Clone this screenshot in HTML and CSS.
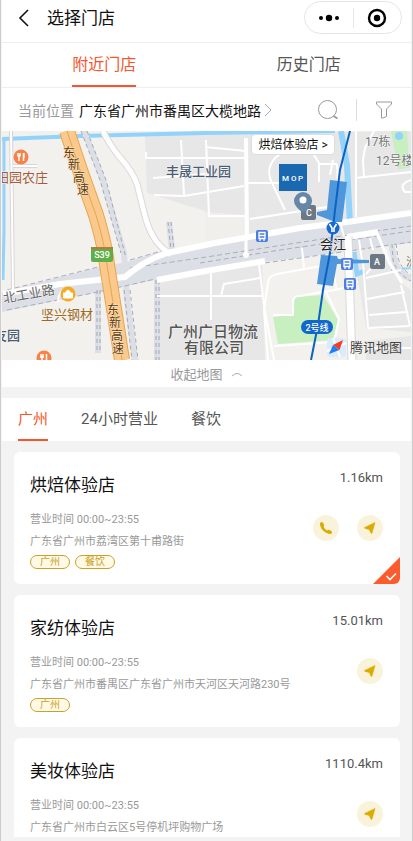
FILE: index.html
```html
<!DOCTYPE html>
<html lang="zh-CN">
<head>
    <meta charset="UTF-8">
    <meta name="viewport" content="width=device-width, initial-scale=1.0">
    <title>选择门店</title>
    <link rel="stylesheet" href="styles.css">
</head>
<body>
    <div class="screen">
        <header class="header">
            <button class="back" aria-label="返回">
                <svg width="12" height="18" viewBox="0 0 12 18"><path d="M10 1 2 9l8 8" fill="none" stroke="#111" stroke-width="1.6"/></svg>
            </button>
            <h1>选择门店</h1>
            <div class="capsule">
                <button aria-label="更多">
                    <svg width="22" height="8" viewBox="0 0 22 8"><circle cx="3" cy="4" r="2"/><circle cx="11" cy="4" r="3.2"/><circle cx="19" cy="4" r="2"/></svg>
                </button>
                <button aria-label="关闭">
                    <svg width="20" height="20" viewBox="0 0 20 20"><circle cx="10" cy="10" r="8" fill="none" stroke="#000" stroke-width="2.4"/><circle cx="10" cy="10" r="3.2"/></svg>
                </button>
            </div>
        </header>

        <nav class="tabs">
            <a href="#" class="active">附近门店</a>
            <a href="#">历史门店</a>
        </nav>

        <div class="location">
            <span class="location-label">当前位置</span>
            <a href="#">广东省广州市番禺区大榄地路<svg width="8" height="14" viewBox="0 0 8 14"><path d="M1 1l6 6-6 6" fill="none" stroke="#aaa"/></svg></a>
            <button class="search" aria-label="搜索">
                <svg width="20" height="20" viewBox="0 0 20 20"><circle cx="9.5" cy="9.5" r="9" fill="none" stroke="#999"/><path d="M15.500 16l4 2.500" stroke="#999" stroke-width="1.500"/></svg>
            </button>
            <button class="filter" aria-label="筛选">
                <svg width="16" height="18" viewBox="0 0 16 18"><path d="M.5 1h15v2L10.500 8v7.500L7 17H5.500V8L.5 3z" fill="none" stroke="#999" stroke-linejoin="round"/></svg>
            </button>
        </div>

        <div class="map">
            <svg viewBox="2 131 409 229" preserveAspectRatio="xMidYMid slice">
                <rect x="2" y="131" width="409" height="229" fill="#f2f1ed"/>

                <!-- zones -->
                <g fill="#e7e7e8">
                    <path d="M145 135 411 131V216L205 249V211L147 193z"/>
                    <path d="M157 283 262 260 265 360H157z"/>
                    <path d="M353 250 380 240 401 283 411 290V332L366 328z"/>
                    <path d="M366 341 411 336V360H366z"/>
                </g>
                <path d="M205 212 246 215V240L205 247z" fill="#f0efec"/>
                <path d="M295 297 323 295 338 320 333 340 278 344 273 317 293 315z" fill="#c7efc0"/>
                <path d="M391 131h16l2 37-11 1z" fill="#c7efc0"/>

                <!-- water -->
                <g fill="none" stroke="#93d3fb">
                    <path d="M2 139 80 136 205 133 335 131" stroke-width="4"/>
                    <path d="M4 141V230L3 280" stroke-width="3"/>
                    <path d="M341 131 347 165 350 224" stroke-width="6"/>
                    <path d="M354 252 357 274 365 271" stroke-width="5"/>
                    <path d="M391 270 411 268" stroke-width="2"/>
                </g>
                <circle cx="399" cy="136" r="4" fill="#93d3fb"/>

                <!-- railway -->
                <path d="M2 292 100 267 127 262 165 250 411 214V243L265 262 155 280 2 312z" fill="#dcdfe6"/>
                <g fill="none" stroke-linejoin="round">
                    <path d="M84 131 103 180 124 253 127 300 135 360M98 285V353M157 280V360M169 222 172 250" stroke="#dcdfe6" stroke-width="6"/>
                    <path d="M81 131 100 180 121 253M87 131 106 180 126 258M124 290 132 360M130 290 138 360M97 290V353M100 290V353M156 280V360M159 280V360M168 222 171 250M171 222 174 250" stroke="#a3a9b8" stroke-dasharray="4 3"/>
                    <path d="M7 290 102 266M7 310 103 291 155 279M130 260 165 250M130 268 200 258 335 237 411 226M200 263 280 250 411 231M265 263 335 253 411 242" stroke="#a9aebc" stroke-dasharray="5 3"/>
                    <path d="M391 244 395 262Q399 274 411 279" stroke="#dcdfe6" stroke-width="6"/>
                    <path d="M392 244 393 260Q397 274 411 281M396 244 398 258Q402 270 411 275" stroke="#a5abba" stroke-dasharray="4 3"/>
                </g>

                <!-- small streets -->
                <g fill="none" stroke="#d6d6d8" stroke-width="4">
                    <path d="M11 131 13 290M13 166H37"/>
                </g>
                <g fill="none" stroke="#fff" stroke-width="2" stroke-linejoin="round">
                    <path d="M11 131 13 290M13 166H37"/>
                    <path d="M146 152V158H244M153 178 205 174M154 195 184 196 244 186M181 140 184 195M206 140 209 216H246M205 147 246 151"/>
                    <path d="M246 138 247 240" stroke-width="4"/>
                    <path d="M248 183H292M250 219 327 207M285 210 272 183Q265 170 275 158L292 145M314 134V155L319 163V182M333 160 330 175M318 164H337"/>
                    <path d="M355 178 411 172M411 180Q398 184 405 192H411M374 131 365 148 363 160 364 177M356 131 356 217M337 164 340 222 345 240"/>
                    <path d="M302 248 304 269M259 264 264 306 274 360M268 360 264 310 268 283Q268 276 277 274L327 265Q333 264 334 273L336 289M273 315H293V300Q294 296 300 296L345 288M326 292 339 319 334 342 274 346"/>
                    <path d="M157 296H262M221 296 224 284 260 278M211 272V320"/>
                    <path d="M363 262 368 328 410 326M366 274 380 258M366 278 401 270M367 299 405 292M369 315 406 312M401 285 410 326M367 348H411M359 240 362 260M370 238 373 250"/>
                    <path d="M58 302Q58 292 66 288M158 245 170 256"/>
                </g>

                <!-- main roads -->
                <g fill="none" stroke-linejoin="round">
                    <path d="M103 131Q108 142 118 155 133 172 137 184L144 212Q151 242 168 252" stroke="#d9d9d9" stroke-width="7"/>
                    <path d="M103 131Q108 142 118 155 133 172 137 184L144 212Q151 242 168 252" stroke="#fff" stroke-width="5"/>
                    <path d="M3 294 60 284 125 277Q145 260 167 253L215 243 300 228 347 222 411 213" stroke="#fff" stroke-width="6"/>
                    <path d="M157 280 200 272 265 261M347 237 378 232" stroke="#fff" stroke-width="6"/>
                    <path d="M377 233 389 262 402 283" stroke="#fff" stroke-width="3"/>
                    <circle cx="246" cy="255" r="3" fill="#fff"/>
                    <path d="M246 240V255" stroke="#fff" stroke-width="3"/>
                    <path d="M348 236 349 270 352 360" stroke="#d9d9d9" stroke-width="9"/>
                    <path d="M348 236 349 270 352 360" stroke="#fff" stroke-width="7"/>
                </g>

                <!-- highway -->
                <g fill="none">
                    <path d="M67 131 80 170 96 215Q105 245 107 265L115 315 122 360" stroke="#e9a64d" stroke-width="16"/>
                    <path d="M67 131 80 170 96 215Q105 245 107 265L115 315 122 360" stroke="#fbc98c" stroke-width="14"/>
                    <path d="M67 131 80 170 96 215Q105 245 107 265L115 315 122 360" stroke="#e9a64d"/>
                </g>

                <!-- metro line -->
                <g fill="#4f96db">
                    <path d="M330 180 347 182 343 215 342 222 335 222 317 215 317 212 327 210z"/>
                    <path d="M321 255 337 256 338 259 369 260V263L337 264 333 286 317 284z"/>
                </g>
                <path d="M350 131 340 170 335 210 333 228 330 253 323 290 318 325 311 360" fill="none" stroke="#0c62c4" stroke-width="2"/>
                <circle cx="333" cy="228" r="6.500" fill="#1769cf"/>
                <path d="M329.500 224 332 228V232M336.500 224 334 228V232" fill="none" stroke="#fff" stroke-width="1.600"/>
                <rect x="301" y="320" width="32" height="14" rx="7" fill="#1267cd"/>

                <!-- bus and exit marks -->
                <g fill="#4c7de0">
                    <rect x="256" y="230" width="12" height="12" rx="2"/>
                    <rect x="341" y="258" width="12" height="12" rx="2"/>
                    <rect x="344" y="278" width="12" height="12" rx="2"/>
                </g>
                <g fill="none" stroke="#fff" stroke-width="1.3">
                    <path d="M259 238.500V232.500H265V238.500zM259 235.500h6M260 239v2M264 239v2"/>
                    <path d="M344 266.500V260.500H350V266.500zM344 263.500h6M345 267v2M349 267v2"/>
                    <path d="M347 286.500V280.500H353V286.500zM347 283.500h6M348 287v2M352 287v2"/>
                </g>
                <rect x="301" y="205" width="15" height="15" rx="2" fill="#6d7887"/>
                <rect x="370" y="254" width="15" height="15" rx="2" fill="#6d7887"/>
                <path d="M303 213Q294 206 294 201A9 9 0 0 1 312 201Q312 206 303 213z" fill="#6787a6"/>
                <circle cx="303" cy="200" r="3.500" fill="#fff"/>

                <!-- store logo -->
                <rect x="279" y="164" width="28" height="27" fill="#1968b0"/>
                <text y="181" class="logo-text"><tspan x="282">M</tspan><tspan x="291">O</tspan><tspan x="298">P</tspan></text>

                <!-- points of interest -->
                <circle cx="21" cy="157" r="7.500" fill="#f98148"/>
                <path d="M18 153v3.500M20 153v3.500M19 155v6M23.500 153v8M24 153v5" stroke="#fff" stroke-width="1.500"/>
                <circle cx="44" cy="358" r="7.500" fill="#f98148"/>
                <path d="M41 354v4M43 354v4M42 356v6M46.500 354v8" stroke="#fff" stroke-width="1.500"/>
                <circle cx="68" cy="294" r="7.500" fill="#f9a91c"/>
                <path d="M63.500 293h9v5h-9zM66 293v-1.500q2-3 4 0V293" fill="#fff" stroke="#fff"/>

                <rect x="91" y="247" width="22" height="15" rx="2" fill="#5fae4a"/>
                <path d="M91 249v-2h22v2z" fill="#b07b42"/>

                <g class="map-text">
                    <text x="-4" y="182" class="food">田园农庄</text>
                    <text x="41" y="319" class="shop">坚兴钢材</text>
                    <text x="-6" y="340" class="zone">友园</text>
                    <text x="166" y="176" class="zone">丰晟工业园</text>
                    <text x="365" y="146" class="block">17栋</text>
                    <text x="376" y="165" class="block">12号楼</text>
                    <text x="168" y="337" class="company">广州广日物流</text>
                    <text x="184" y="353" class="company">有限公司</text>
                    <text x="320" y="249" class="station">会江</text>
                    <text x="406" y="266" class="block">洲</text>
                    <text x="4" y="303" class="road" transform="rotate(-10 4 303)">北工业路</text>
                    <text class="highway"><tspan x="63" y="157">东</tspan><tspan x="68" y="169">新</tspan><tspan x="73" y="182">高</tspan><tspan x="77" y="194">速</tspan></text>
                    <text class="highway"><tspan x="107" y="314">东</tspan><tspan x="109" y="327">新</tspan><tspan x="111" y="340">高</tspan><tspan x="112" y="353">速</tspan></text>
                </g>
                <g class="badge-text">
                    <text x="102" y="258">S39</text>
                    <text x="317" y="331">2号线</text>
                    <text x="309" y="216">C</text>
                    <text x="377" y="265">A</text>
                </g>

                <!-- map provider -->
                <rect x="327" y="338" width="19" height="19" rx="4" fill="#d9ecfb"/>
                <path d="M327 351 346 343M333 338 340 357" stroke="#fff" stroke-width="2"/>
                <path d="M343 340 339.500 350 333 345z" fill="#fa3a1e"/>
                <path d="M329 354 333 345 339.500 350z" fill="#1f80f3"/>
                <text x="350" y="352" class="provider">腾讯地图</text>
            </svg>
            <button class="map-label">烘焙体验店 &gt;</button>
        </div>

        <button class="collapse">收起地图
            <svg width="12" height="6" viewBox="0 0 12 6"><path d="M1 5q5-5 10 0" fill="none" stroke="#aaa"/></svg>
        </button>

        <nav class="categories">
            <a href="#" class="active">广州</a>
            <a href="#">24小时营业</a>
            <a href="#">餐饮</a>
        </nav>

        <main class="stores">
            <article class="card">
                <div class="card-main">
                    <h2>烘焙体验店</h2>
                    <p>营业时间 00:00~23:55</p>
                    <p>广东省广州市荔湾区第十甫路街</p>
                    <div class="tags"><span>广州</span><span>餐饮</span></div>
                </div>
                <div class="card-side">
                    <span class="distance">1.16km</span>
                    <div class="actions">
                        <button aria-label="电话"><svg width="14" height="14" viewBox="0 0 14 14"><path d="M2.500 2.500C2 7 7 12 11.500 11.500" fill="none" stroke="#dcab00" stroke-width="2.600"/><path d="M2.700 2.800l.8 1.700M9.600 10.600l1.700.7" stroke="#dcab00" stroke-width="3.400" stroke-linecap="round"/></svg></button>
                        <button aria-label="导航"><svg width="12" height="12" viewBox="0 0 12 12"><path d="M11 .500.800 5.400q-.7.600.2 1l4.200 1 1.900 3.800q.6.700.9-.1z" fill="#dcab00" stroke="#dcab00" stroke-width=".6"/></svg></button>
                    </div>
                </div>
                <svg class="checked" width="27" height="27" viewBox="0 0 27 27"><path d="M27 0v27H0z" fill="#fc5b2d"/><path d="M13.500 19l3.500 3.500 6-6" fill="none" stroke="#fff" stroke-width="1.600"/></svg>
            </article>

            <article class="card">
                <div class="card-main">
                    <h2>家纺体验店</h2>
                    <p>营业时间 00:00~23:55</p>
                    <p>广东省广州市番禺区广东省广州市天河区天河路230号</p>
                    <div class="tags"><span>广州</span></div>
                </div>
                <div class="card-side">
                    <span class="distance">15.01km</span>
                    <div class="actions">
                        <button aria-label="导航"><svg width="12" height="12" viewBox="0 0 12 12"><path d="M11 .500.800 5.400q-.7.600.2 1l4.200 1 1.900 3.800q.6.700.9-.1z" fill="#dcab00" stroke="#dcab00" stroke-width=".6"/></svg></button>
                    </div>
                </div>
            </article>

            <article class="card">
                <div class="card-main">
                    <h2>美妆体验店</h2>
                    <p>营业时间 00:00~23:55</p>
                    <p>广东省广州市白云区5号停机坪购物广场</p>
                </div>
                <div class="card-side">
                    <span class="distance">1110.4km</span>
                    <div class="actions">
                        <button aria-label="导航"><svg width="12" height="12" viewBox="0 0 12 12"><path d="M11 .500.800 5.400q-.7.600.2 1l4.200 1 1.900 3.800q.6.700.9-.1z" fill="#dcab00" stroke="#dcab00" stroke-width=".6"/></svg></button>
                    </div>
                </div>
            </article>
        </main>
    </div>
</body>
</html>
```
FILE: styles.css
```css
* {
    box-sizing: border-box;
    margin: 0;
    padding: 0;
}

body {
    background: #fff;
    font-family: Roboto, "Noto Sans CJK SC", sans-serif;
    color: #111;
}

a {
    color: inherit;
    text-decoration: none;
}

button {
    border: none;
    background: none;
    font-family: inherit;
    color: inherit;
    cursor: pointer;
}

h1, h2 {
    font-size: 17px;
    font-weight: 400;
    line-height: 24px;
}

svg {
    display: block;
}

.screen {
    display: flex;
    flex-direction: column;
    height: 100vh;
    padding: 0 1px 4px;
    border: solid #ccc;
    border-width: 0 1px;
    background: #f3f3f3;
}

.header,
.tabs,
.location,
.map,
.collapse,
.categories {
    flex-shrink: 0;
    background: #fff;
}

/* top bar */
.header {
    display: flex;
    align-items: center;
    height: 43px;
    padding: 0 9px 7px 16px;
    border-bottom: 1px solid #eee;
}

.header h1 {
    margin-left: 17px;
}

.capsule {
    display: flex;
    align-items: center;
    width: 98px;
    height: 33px;
    margin-left: auto;
    border: 1px solid #e6e6e6;
    border-radius: 17px;
}

.capsule button {
    display: flex;
    flex: 1;
    justify-content: center;
    align-items: center;
    height: 20px;
}

.capsule button + button {
    border-left: 1px solid #e6e6e6;
}

/* nearby / history */
.tabs {
    display: flex;
    justify-content: space-around;
    height: 45px;
    border-bottom: 1px solid #eee;
    font-size: 16px;
    line-height: 44px;
    color: #555;
}

.tabs a,
.categories a {
    height: 100%;
}

.tabs .active,
.categories .active {
    border-bottom: 2px solid #f5562b;
    color: #f5562b;
}

.location {
    display: flex;
    align-items: center;
    height: 43px;
    padding: 0 19px 0 16px;
    font-size: 14px;
}

.location-label {
    margin-right: 5px;
    color: #999;
}

.location a {
    display: flex;
    align-items: center;
    gap: 3px;
}

.search {
    margin-left: auto;
    padding-right: 18px;
}

.filter {
    padding: 2px 0 2px 19px;
    border-left: 1px solid #ddd;
}

/* map */
.map {
    position: relative;
}

.map > svg {
    width: 100%;
    height: 229px;
}

.map-label {
    position: absolute;
    top: 3px;
    left: 61%;
    height: 21px;
    padding: 0 6px;
    border: 1px solid #ddd;
    border-radius: 4px;
    background: #fff;
    font-size: 12px;
    line-height: 18px;
}

.map-text text {
    paint-order: stroke;
    stroke: #f6f6f4;
    stroke-width: 1px;
    font-size: 13px;
}

.map-text .food { fill: #a65a3a; }
.map-text .shop { fill: #a06a1c; }
.map-text .zone { fill: #4a5d75; font-weight: 500; }
.map-text .block { fill: #777; font-size: 12px; }
.map-text .company { fill: #555; font-size: 15px; font-weight: 500; }
.map-text .station { fill: #222; }
.map-text .road { fill: #666; }
.map-text .highway { fill: #5a3a10; font-size: 12px; stroke: #fde3c0; }

.badge-text {
    fill: #fff;
    font-size: 9px;
    font-weight: 500;
    text-anchor: middle;
}

.logo-text {
    fill: #fff;
    font-size: 8px;
    font-weight: 500;
}

.provider {
    fill: #444;
    font-size: 13px;
}

.collapse {
    display: flex;
    justify-content: center;
    align-items: center;
    gap: 8px;
    height: 27px;
    font-size: 13px;
    color: #999;
}

/* category filter */
.categories {
    display: flex;
    gap: 33px;
    height: 43px;
    margin-top: 11px;
    padding: 0 16px;
    font-size: 15px;
    line-height: 43px;
    color: #555;
}

/* store list */
.stores {
    flex: 1;
    min-height: 0;
    padding: 11px 11px 0 12px;
    overflow-y: auto;
    scrollbar-width: none;
}

.card {
    position: relative;
    display: flex;
    justify-content: space-between;
    min-height: 132px;
    margin-bottom: 11px;
    border-radius: 6px;
    background: #fff;
    overflow: hidden;
}

.card-main {
    padding: 21px 0 15px 16px;
}

.card-main h2 {
    margin-bottom: 12px;
}

.card-main p {
    font-size: 11px;
    line-height: 22px;
    color: #999;
}

.tags {
    display: flex;
    gap: 5px;
    margin-top: 2px;
}

.tags span {
    padding: 0 9px;
    border: 1px solid #c9a227;
    border-radius: 7px;
    background: #fff9e6;
    font-size: 10px;
    line-height: 12px;
    color: #c9a227;
}

.card-side {
    display: flex;
    flex-direction: column;
    align-items: flex-end;
    padding: 16px 17px 0 0;
}

.distance {
    font-size: 13px;
    line-height: 20px;
    color: #555;
}

.actions {
    display: flex;
    gap: 18px;
    margin-top: 27px;
}

.actions button {
    display: flex;
    justify-content: center;
    align-items: center;
    width: 26px;
    height: 26px;
    border-radius: 50%;
    background: #faf3db;
}

.checked {
    position: absolute;
    right: 0;
    bottom: 0;
}
```
